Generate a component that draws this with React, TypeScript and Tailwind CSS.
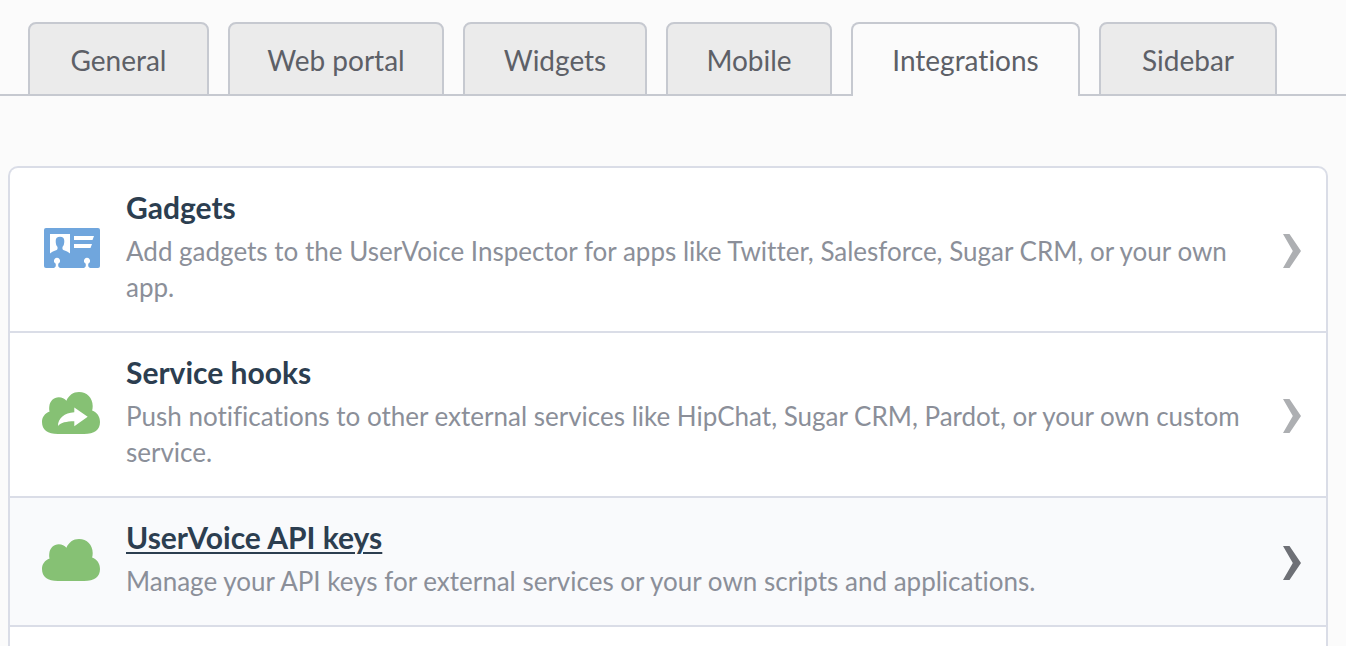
import type { ReactNode } from "react";

type Tab = { label: string; width: string; active?: boolean };

const tabs: Tab[] = [
  { label: "General", width: "w-[181px]" },
  { label: "Web portal", width: "w-[216px]" },
  { label: "Widgets", width: "w-[184px]" },
  { label: "Mobile", width: "w-[166px]" },
  { label: "Integrations", width: "w-[229px]", active: true },
  { label: "Sidebar", width: "w-[178px]" },
];

function BadgeIcon() {
  return (
    <svg viewBox="0 0 56 40" className="h-10 w-14" aria-hidden="true">
      <rect width="56" height="40" rx="2" fill="#70a6dd" />
      <path
        fill="#fff"
        d="M6 6H26V25.5C24.5 24 22 23 19.3 22C18.4 21.6 18.2 20 18.6 18.8C19.8 17.6 20.3 15.5 20.3 13C20.3 10 18.8 8.7 16 8.7S11.7 10 11.7 13C11.7 15.5 12.2 17.6 13.4 18.8C13.8 20 13.6 21.6 12.7 22C10 23 7.5 24 6 25.5Z"
      />
      <path fill="#fff" d="M30 8H50L48.5 12H30ZM30 16H48L46.5 20H30Z" />
      <path
        fill="#fff"
        d="M10 40C11.6 39.4 12.2 38 11.6 35.6A3.1 3.1 0 1 1 14.4 35.6C13.8 38 14.4 39.4 16 40ZM40 40C41.6 39.4 42.2 38 41.6 35.6A3.1 3.1 0 1 1 44.4 35.6C43.8 38 44.4 39.4 46 40Z"
      />
    </svg>
  );
}

function CloudIcon({ arrow = false }: { arrow?: boolean }) {
  return (
    <svg viewBox="0 0 58 42" className="h-[42px] w-[58px]" aria-hidden="true">
      <path
        fill="#86c174"
        d="M7.6 19.4C7 17.8 7.2 15.8 7.3 14.5C7.8 9 11.8 5.2 16.8 5.2C20 5.2 22.6 6.4 24.4 8.8C26.6 3.4 31.3 0 37 0C45 0 50.7 6 50.7 14C50.7 15.8 50.5 17.3 50.1 18.6C55 20.5 58 24.5 58 30C58 38 52.5 42 42 42H16C5.5 42 0 38 0 30C0 25 2.8 21.3 7.6 19.4Z"
      />
      {arrow && (
        <path
          fill="#fff"
          d="M45.7 24.8L32.3 15.6V20.3C22.5 20.8 15.8 26.5 16 34C19 30.5 24 29.3 32.3 29.2V34.2Z"
        />
      )}
    </svg>
  );
}

function Chevron({ dark = false }: { dark?: boolean }) {
  return (
    <svg
      viewBox="0 0 18 34"
      className={`mt-2.5 h-[34px] w-[18px] shrink-0 ${dark ? "text-[#6e7076]" : "text-[#adafb2]"}`}
      aria-hidden="true"
    >
      <path fill="currentColor" d="M0 0H6.5L18 17L6.5 34H0L9.8 17Z" />
    </svg>
  );
}

type Item = { title: string; text: string; icon: ReactNode; hovered?: boolean };

const items: Item[] = [
  {
    title: "Gadgets",
    text: "Add gadgets to the UserVoice Inspector for apps like Twitter, Salesforce, Sugar CRM, or your own app.",
    icon: <BadgeIcon />,
  },
  {
    title: "Service hooks",
    text: "Push notifications to other external services like HipChat, Sugar CRM, Pardot, or your own custom service.",
    icon: <CloudIcon arrow />,
  },
  {
    title: "UserVoice API keys",
    text: "Manage your API keys for external services or your own scripts and applications.",
    icon: <CloudIcon />,
    hovered: true,
  },
];

export default function App() {
  return (
    <div className="h-screen overflow-hidden bg-[#fbfbfb] font-['Lato',sans-serif] [font-variant-ligatures:none]">
      <nav className="flex items-end border-b-2 border-[#c6c9d0] pt-[22px] pl-7">
        <div className="-mb-0.5 flex items-end gap-[19px]">
          {tabs.map((tab) => (
            <a
              key={tab.label}
              href="#"
              aria-current={tab.active ? "page" : undefined}
              className={`flex h-[74px] justify-center rounded-t-lg border-2 border-[#c6c9d0] pt-[18px] text-[28px] leading-9 whitespace-nowrap text-[#5d6067] ${tab.width} ${
                tab.active ? "border-b-0 bg-[#fbfbfb]" : "bg-[#ebebeb]"
              }`}
            >
              {tab.label}
            </a>
          ))}
        </div>
      </nav>
      <main className="pt-[70px] pr-[18px] pl-2">
        <ul className="rounded-t-[10px] border-2 border-b-0 border-[#dadde7] bg-white">
          {items.map((item) => (
            <li key={item.title} className="border-b-2 border-[#dadde7]">
              <a
                href="#"
                className={`flex items-center pt-[19px] pr-[25px] pb-[26px] pl-8 ${item.hovered ? "bg-[#f9fafc]" : ""}`}
              >
                <span className="flex w-[58px] shrink-0 justify-end pt-[3px]">{item.icon}</span>
                <span className="ml-[26px] min-w-0 flex-1 pr-10">
                  <span
                    className={`block text-[30px] leading-10 font-bold text-[#2c3e50] ${
                      item.hovered ? "underline decoration-2 underline-offset-3" : ""
                    }`}
                  >
                    {item.title}
                  </span>
                  <span className="mt-1.5 block text-[26px] leading-9 text-[#8b8f99]">{item.text}</span>
                </span>
                <Chevron dark={item.hovered} />
              </a>
            </li>
          ))}
          <li className="h-40" />
        </ul>
      </main>
    </div>
  );
}
